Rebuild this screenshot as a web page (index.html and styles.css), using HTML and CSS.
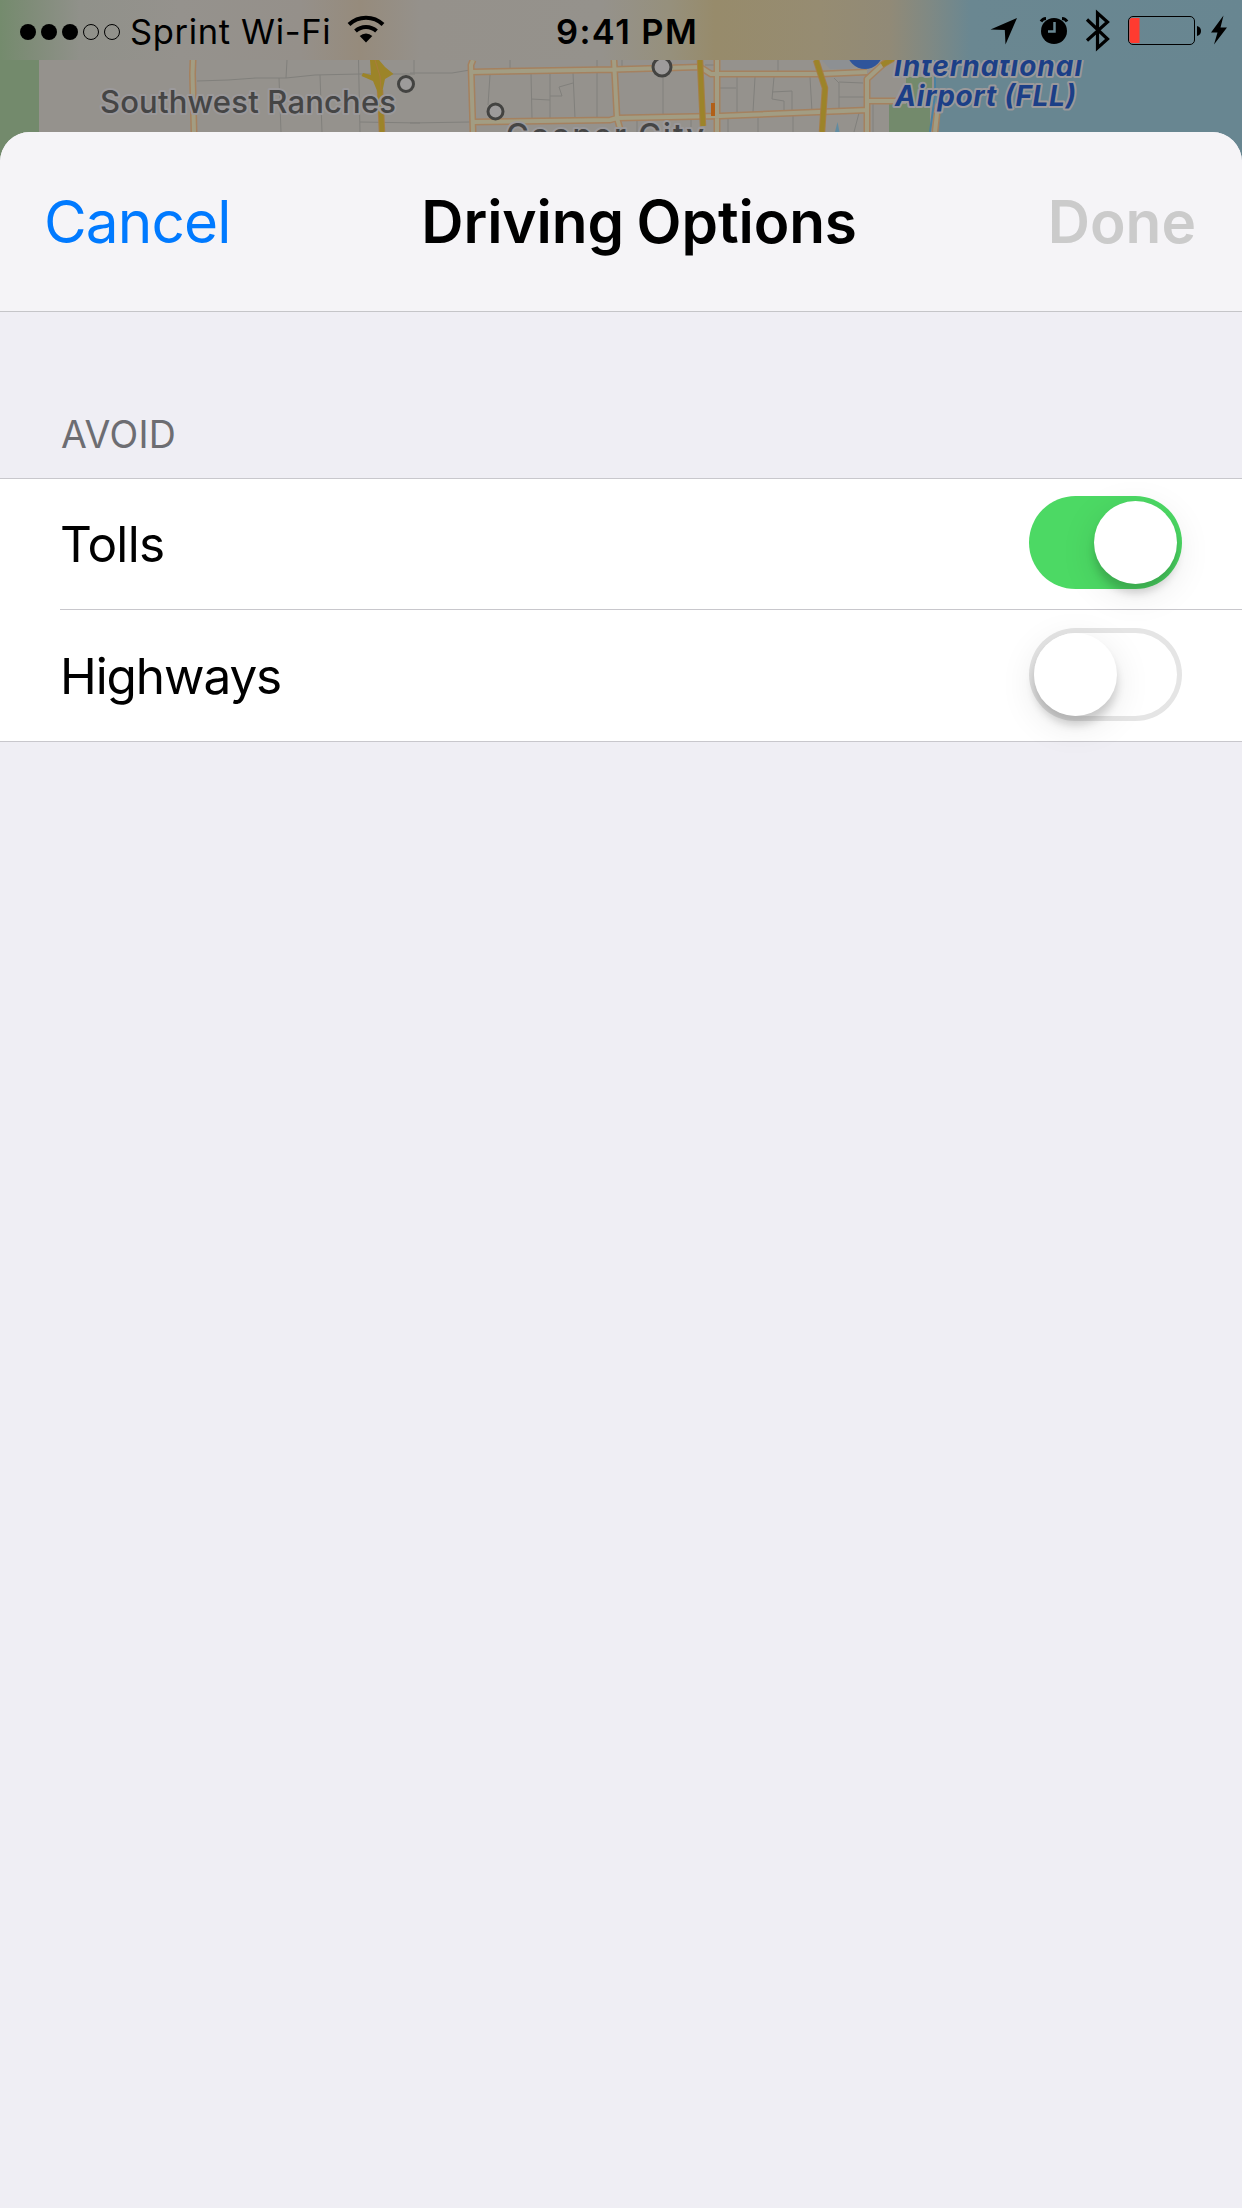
FILE: index.html
```
<!DOCTYPE html>
<html lang="en">
<head>
  <meta charset="UTF-8" />
  <meta name="viewport" content="width=device-width, initial-scale=1.0" />
  <title>Driving Options</title>
  <link rel="stylesheet" href="styles.css">
</head>
<body>
  <!-- map behind the sheet -->
  <svg class="map" width="1242" height="160" viewBox="0 0 1242 160">
    <rect width="1242" height="160" fill="#95928d" />
    <rect width="39" height="160" fill="#738a6c" />
    <path d="M932 50H1242V160H938L936 110Z" fill="#688691" />
    <path d="M906 77H932V104H930V134H889V104H906Z" fill="#738a6c" />
    <path d="M822 60H868L850 69H830Z" fill="#8d9093" />
    <g class="street">
      <path d="M197 81L228 80L256 78L286 78L315 75L360 74L415 74M287 60L286 78M279 78L281 132M320 75L322 132M358.500 60L360 132M360 122L420 123M414 60V73" />
      <path d="M410 73H452L470 70M410 123L470 122M490 75L488 105M510 60V68M531 74L532 118M531 99L550 100M550 74V118M550 96H562L559 87L573 83M573 73L575 118M597 60V118M622 60V68M663 77V115M720 88H736M737 77V112M755 77L753 112M774 77L772 99L784 101V112M772 92L792 91V112M810 77L812 112M778 60V72M705 65H714M637 120V132M691 120V132M728 116V132M758 116V132M793 115V132M834 78L839 83V108M839 82L863 83M839 97H864M859 113L854 132M873 103V132" />
    </g>
    <path class="road-edge" d="M193 60L192.500 74L194 132" />
    <path class="road" d="M193 60L192.500 74L194 132" />
    <g class="road-edge">
      <path d="M473 60L471 65L473 132M614 60L617 118L621 132M717 60V132M471 72L614 69.5L700 67L711 74H822L867 72M473 122L610 120L617 118L720 116L868 110M867 132V79L890 58M868 101H900M938 104L935 132" />
    </g>
    <g class="road">
      <path d="M473 60L471 65L473 132M614 60L617 118L621 132M717 60V132M471 72L614 69.5L700 67L711 74H822L867 72M473 122L610 120L617 118L720 116L868 110M867 132V79L890 58M868 101H900M938 104L935 132" />
    </g>
    <path d="M935 60V95L930 132" fill="none" stroke="#4b81a0" stroke-width="2" />
    <g class="highway-edge">
      <path d="M380 90L382 132M700 60L703 126M816 60L825 88L822 132M882 65L894 58" />
    </g>
    <g class="highway">
      <path d="M380 90L382 132M700 60L703 126M816 60L825 88L822 132M882 65L894 58" />
    </g>
    <path d="M370 60H379L385 67L393.500 74L385 79L382 93H378L373 81L361.500 76L363 73L371 75Z" fill="#9c8429" />
    <path d="M375 60L380 76L381 90" fill="none" stroke="#aa7b3d" stroke-width="1" />
    <rect x="711" y="103" width="4" height="13" fill="#b16018" />
    <path d="M837.500 122L835 132H839.500Z" fill="#618ba0" />
    <circle cx="865" cy="51" r="18" fill="#2f559b" />
    <g class="town">
      <circle cx="406" cy="84" r="7.500" />
      <circle cx="495.500" cy="111.500" r="7.500" />
      <circle cx="662" cy="67" r="9" />
    </g>
    <text class="place" x="100" y="112.500" textLength="296">Southwest Ranches</text>
    <text class="place" x="506" y="146" textLength="198">Cooper City</text>
    <text class="airport" x="894" y="76" textLength="188">International</text>
    <text class="airport" x="895" y="106" textLength="181">Airport (FLL)</text>
  </svg>

  <div class="status-bar">
    <div class="status-left">
      <svg class="signal" width="102" height="18" viewBox="0 0 102 18">
        <circle cx="9" cy="9" r="8" />
        <circle cx="30" cy="9" r="8" />
        <circle cx="51" cy="9" r="8" />
        <circle class="empty" cx="72" cy="9" r="7.500" />
        <circle class="empty" cx="93" cy="9" r="7.500" />
      </svg>
      <span class="carrier">Sprint Wi-Fi</span>
      <svg class="wifi" width="38" height="28" viewBox="0 0 38 28">
        <path class="arc" d="M2 9.500A24.500 24.500 0 0 1 36 9.500" />
        <path class="arc" d="M8.500 16A15.500 15.500 0 0 1 29.500 16" />
        <path d="M19 27.500L12.700 21A9 9 0 0 1 25.300 21Z" />
      </svg>
    </div>
    <span class="time">9:41 PM</span>
    <svg class="indicators" width="242" height="60" viewBox="1000 0 242 60">
      <path d="M990.500 29.500L1017 18L1005.500 44.500L1004.800 30Z" />
      <!-- alarm -->
      <circle cx="1054" cy="31" r="13" />
      <path class="bell" d="M1041 21.500A6 6 0 0 1 1046 18.500M1067 21.500A6 6 0 0 0 1062 18.500" />
      <path class="hands" d="M1054.500 22V31.500H1048" />
      <!-- bluetooth -->
      <path class="bluetooth" d="M1087 19.500L1107.500 39L1097.500 48V13L1107.500 22L1087 40.500" />
      <!-- battery -->
      <rect class="battery" x="1128.500" y="16.500" width="66" height="28" rx="4.500" />
      <path d="M1132 18H1139.500V43H1132Q1129.500 43 1129.500 40.500V20.500Q1129.500 18 1132 18Z" fill="#ff3b30" />
      <path d="M1197 26Q1201 27 1201 31Q1201 35 1197 36Z" />
      <path d="M1223.500 15.500L1211 32.500H1217.500L1214 44.500L1227 27.500H1220.500Z" />
    </svg>
  </div>

  <div class="sheet">
    <div class="nav">
      <a class="cancel">Cancel</a>
      <h1>Driving Options</h1>
      <a class="done">Done</a>
    </div>
    <h2>AVOID</h2>
    <div class="options">
      <div class="row">
        <span class="tolls">Tolls</span>
        <div class="switch on"><div class="knob"></div></div>
      </div>
      <div class="row">
        <span class="highways">Highways</span>
        <div class="switch"><div class="knob"></div></div>
      </div>
    </div>
  </div>
</body>
</html>
```
FILE: styles.css
```
* {
  box-sizing: border-box;
}

body {
  margin: 0;
  width: 1242px;
  height: 2208px;
  overflow: hidden;
  display: flex;
  flex-direction: column;
  font-family: Inter, "Liberation Sans", sans-serif;
  color: #000;
  background: #efeef4;
}

/* map */
.map {
  position: absolute;
  top: 0;
  left: 0;
}

.map path {
  stroke-linejoin: round;
}

.street {
  fill: none;
  stroke: #81807c;
  stroke-width: 1;
}

.road-edge {
  fill: none;
  stroke: #a5815f;
  stroke-width: 7;
}

.road {
  fill: none;
  stroke: #a29d83;
  stroke-width: 4;
}

.highway-edge {
  fill: none;
  stroke: #a67f45;
  stroke-width: 6.5;
}

.highway {
  fill: none;
  stroke: #9c8429;
  stroke-width: 4.5;
}

.town {
  fill: #9d9b9b;
  stroke: #434341;
  stroke-width: 3;
}

.place,
.airport {
  paint-order: stroke;
  stroke: #9b999b;
  stroke-width: 4px;
  stroke-linejoin: round;
}

.place {
  font-size: 31px;
  font-weight: 500;
  fill: #454545;
}

.airport {
  font-size: 28px;
  font-weight: 700;
  font-style: italic;
  fill: #1c3f87;
}

/* status bar */
.status-bar {
  position: relative;
  height: 60px;
  display: flex;
  justify-content: space-between;
  background: linear-gradient(90deg, #748b6d 0, #7f8c78 30px, #90918a 80px, #95928d 180px, #95908a 300px, #968b7c 360px, #95918b 420px, #95928c 600px, #96907c 670px, #978b6b 715px, #968c72 820px, #918a77 890px, #7f8984 930px, #6a8791 970px, #688691 100%);
}

.status-left {
  display: flex;
  align-items: center;
  width: 556px;
  padding: 3px 0 0 19px;
}

.signal .empty {
  fill: none;
  stroke: #000;
  stroke-width: 1;
}

.carrier {
  margin-left: 9px;
  font-size: 34.5px;
  letter-spacing: 0.65px;
  white-space: nowrap;
}

.wifi {
  margin: -5px 0 0 16px;
}

.wifi .arc {
  fill: none;
  stroke: #000;
  stroke-width: 4;
}

.time {
  flex: 1;
  padding-top: 3px;
  font-size: 34.5px;
  font-weight: 600;
  line-height: 57px;
  letter-spacing: 1.4px;
}

.indicators {
  overflow: visible;
}

.bell {
  fill: none;
  stroke: #000;
  stroke-width: 3;
}

.hands {
  fill: none;
  stroke: #688691;
  stroke-width: 2.5;
}

.bluetooth {
  fill: none;
  stroke: #000;
  stroke-width: 3.2;
}

.battery {
  fill: none;
  stroke: #000;
  stroke-width: 1;
}

/* sheet */
.sheet {
  position: relative;
  flex: 1;
  margin-top: 72px;
  border-radius: 30px 30px 0 0;
  background: #efeef4;
  overflow: hidden;
}

.nav {
  height: 180px;
  padding: 0 46px 0 44px;
  display: flex;
  align-items: center;
  justify-content: space-between;
  background: #f5f4f7;
  border-bottom: 1px solid #c5c5c8;
  font-size: 58.5px;
}

.cancel {
  letter-spacing: -0.9px;
  color: #007aff;
}

h1,
.done {
  margin: 0;
  font-size: 58.5px;
  font-weight: 600;
}

h1 {
  letter-spacing: -0.1px;
  word-spacing: -2px;
}

.done {
  color: #cbcbcb;
}

h2 {
  height: 166px;
  margin: 0;
  padding: 100px 0 0 61px;
  font-size: 37.5px;
  line-height: 46px;
  font-weight: 400;
  letter-spacing: 0.3px;
  color: #6d6d72;
}

.options {
  background: #fff;
  border-top: 1px solid #c8c7cc;
  border-bottom: 1px solid #c8c7cc;
}

.row {
  height: 131px;
  margin-left: 60px;
  padding-right: 60px;
  display: flex;
  align-items: center;
  justify-content: space-between;
  font-size: 49.5px;
}

.row + .row {
  border-top: 1px solid #c8c7cc;
}

.row:first-child {
  height: 130px;
}

.row:last-child {
  height: 132px;
}

.tolls {
  letter-spacing: -0.7px;
}

.highways {
  letter-spacing: -1.1px;
}

.switch {
  width: 153px;
  height: 93px;
  margin-bottom: 3px;
  padding: 5px;
  border-radius: 47px;
  box-shadow: inset 0 0 0 5px #e5e5e5;
}

.knob {
  width: 83px;
  height: 83px;
  border-radius: 50%;
  background: #fff;
  box-shadow: 0 9px 9px rgba(0, 0, 0, 0.16), 0 9px 36px rgba(0, 0, 0, 0.1);
}

.on {
  background: #4cd964;
  box-shadow: none;
}

.on .knob {
  margin-left: 60px;
}
```
